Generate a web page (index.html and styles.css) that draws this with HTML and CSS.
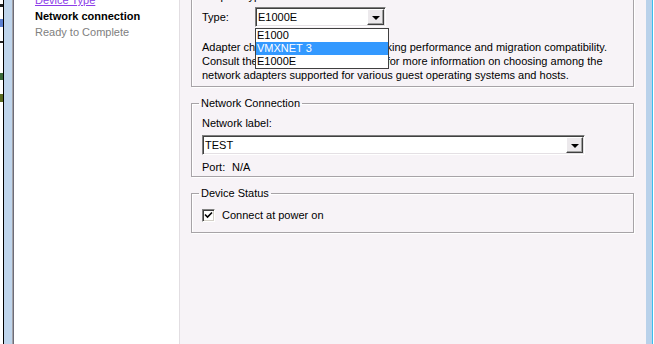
FILE: index.html
```html
<!DOCTYPE html>
<html>
<head>
<meta charset="utf-8">
<link rel="stylesheet" href="styles.css">
</head>
<body>
<div class="window">
  <div class="frame-left">
    <div class="edge-icons">
      <span class="mark m1"></span><span class="mark m2"></span><span class="mark m3"></span><span class="mark m4"></span><span class="mark m5"></span>
    </div>
    <div class="edge-black"></div>
    <div class="edge-blue"></div>
    <div class="edge-grey"></div>
    <div class="edge-dark"></div>
  </div>
  <nav class="sidebar">
    <a class="step visited">Device Type</a>
    <div class="step current">Network connection</div>
    <div class="step pending">Ready to Complete</div>
  </nav>
  <main class="content">
    <fieldset class="group g-adapter">
      <legend>Adapter Type</legend>
      <div class="row type-row">
        <span class="label type-label">Type:</span>
        <div class="combo type-combo">
          <span class="combo-value">E1000E</span>
          <span class="combo-btn"><span class="arrow"></span></span>
          <ul class="droplist">
            <li>E1000</li>
            <li class="sel">VMXNET 3</li>
            <li>E1000E</li>
          </ul>
        </div>
      </div>
      <p class="desc">Adapter choice can affect both networking performance and migration compatibility.<br>Consult the VMware KnowledgeBase for more information on choosing among the<br>network adapters supported for various guest operating systems and hosts.</p>
    </fieldset>
    <fieldset class="group g-network">
      <legend>Network Connection</legend>
      <div class="label net-label">Network label:</div>
      <div class="combo net-combo">
        <span class="combo-value">TEST</span>
        <span class="combo-btn"><span class="arrow"></span></span>
      </div>
      <div class="row port-row"><span class="port-key">Port:</span><span>N/A</span></div>
    </fieldset>
    <fieldset class="group g-status">
      <legend>Device Status</legend>
      <div class="row check-row">
        <span class="checkbox"><svg width="9" height="9" viewBox="0 0 9 9"><path d="M1 3.5 L3.5 6 L8 1.5" fill="none" stroke="#000" stroke-width="1.6"/></svg></span>
        <span>Connect at power on</span>
      </div>
    </fieldset>
  </main>
  <div class="frame-right"><div class="fr-blue"></div><div class="fr-cyan"></div></div>
</div>
</body>
</html>
```
FILE: styles.css
```css
html, body {
  margin: 0;
  padding: 0;
}
body {
  width: 654px;
  height: 344px;
  overflow: hidden;
  font-family: "Liberation Sans", Arial, sans-serif;
  font-size: 11px;
  color: #000;
}
.window {
  display: flex;
  width: 654px;
  height: 344px;
  overflow: hidden;
}
.frame-left {
  display: flex;
  flex: 0 0 14px;
  height: 100%;
}
.edge-icons {
  width: 3px;
  background: #fff;
  display: flex;
  flex-direction: column;
}
.mark { display: block; width: 3px; }
.m1 { height: 3px; margin-top: 4px; background: #222; }
.m2 { height: 8px; margin-top: 12px; background: #5b7fd0; }
.m3 { height: 2px; margin-top: 14px; background: #222; }
.m4 { height: 7px; margin-top: 30px; background: #3a6a3a; }
.m5 { height: 8px; margin-top: 14px; background: #5a6a20; }
.edge-black { width: 1px; background: #000; }
.edge-blue { width: 8px; background: #bfd5ec; }
.edge-grey { width: 1px; background: #a3a3a8; }
.edge-dark { width: 1px; background: #6c6c78; }

.sidebar {
  flex: 0 0 166px;
  background: #fff;
  border-right: 1px solid #e2dee2;
  padding-left: 21px;
  box-sizing: border-box;
  display: flex;
  flex-direction: column;
}
.step {
  line-height: 16px;
  white-space: nowrap;
}
.step:first-child { margin-top: -8px; }
.visited { color: #8c3ce8; text-decoration: underline; }
.current { font-weight: bold; }
.pending { color: #808080; }

.content {
  flex: 0 0 466px;
  background: #f7f3f7;
  padding: 0 12px 0 11px;
  box-sizing: border-box;
  display: flex;
  flex-direction: column;
}
.group {
  margin: 0;
  padding: 0 10px;
  border: 1px solid #a7a3a7;
  box-shadow: 1px 1px 0 #fff, inset 1px 1px 0 #fff;
  min-width: 0;
}
.group legend {
  padding: 0 2px;
  margin-left: -3px;
  line-height: 13px;
}
.g-adapter { margin-top: -10px; padding-bottom: 4px; }
.g-network { margin-top: 10px; padding-bottom: 2px; }
.g-status { margin-top: 10px; padding-bottom: 10px; }

.row { display: flex; align-items: center; }
.type-row { margin-top: 4px; }
.type-label { width: 53px; }
.combo {
  position: relative;
  height: 20px;
  box-sizing: border-box;
  background: #fff;
  border: 1px solid;
  border-color: #7f7f7f #fff #fff #7f7f7f;
  box-shadow: inset 1px 1px 0 #404040, inset -1px -1px 0 #e4e0e4;
  display: flex;
  align-items: center;
}
.type-combo { width: 131px; }
.combo-value { flex: 1; padding-left: 2px; line-height: 14px; }
.combo-btn {
  width: 17px;
  height: 16px;
  margin-right: 1px;
  box-sizing: border-box;
  background: #ece9ec;
  border: 1px solid;
  border-color: #fff #404040 #404040 #fff;
  box-shadow: inset -1px -1px 0 #a0a0a0;
  display: flex;
  align-items: center;
  justify-content: center;
}
.arrow {
  width: 0;
  height: 0;
  border-left: 4px solid transparent;
  border-right: 4px solid transparent;
  border-top: 4px solid #000;
  margin-top: 1px;
}
.droplist {
  position: absolute;
  left: -1px;
  top: 20px;
  width: 132px;
  margin: 0;
  padding: 0;
  list-style: none;
  background: #fff;
  border: 1px solid #404040;
  z-index: 2;
}
.droplist li {
  height: 13px;
  line-height: 13px;
  padding-left: 1px;
}
.droplist li.sel { background: #3399ff; color: #fff; }
.desc {
  margin: 13px 0 0;
  line-height: 14px;
  white-space: nowrap;
}
.net-label { margin-top: 7px; line-height: 13px; }
.net-combo { width: 383px; margin-top: 5px; }
.port-row { margin-top: 6px; line-height: 13px; }
.port-key { width: 30px; }
.check-row { margin-top: 9px; line-height: 13px; }
.checkbox {
  width: 13px;
  height: 13px;
  box-sizing: border-box;
  background: #fff;
  border: 1px solid;
  border-color: #808080 #fff #fff #808080;
  box-shadow: inset 1px 1px 0 #404040, inset -1px -1px 0 #d4d0c8;
  display: flex;
  align-items: center;
  justify-content: center;
  margin-right: 7px;
}
.frame-right {
  flex: 0 0 7px;
  display: flex;
}
.fr-blue { width: 6px; background: #b9d1ea; }
.fr-cyan { width: 1px; background: #3cbcec; }
```
